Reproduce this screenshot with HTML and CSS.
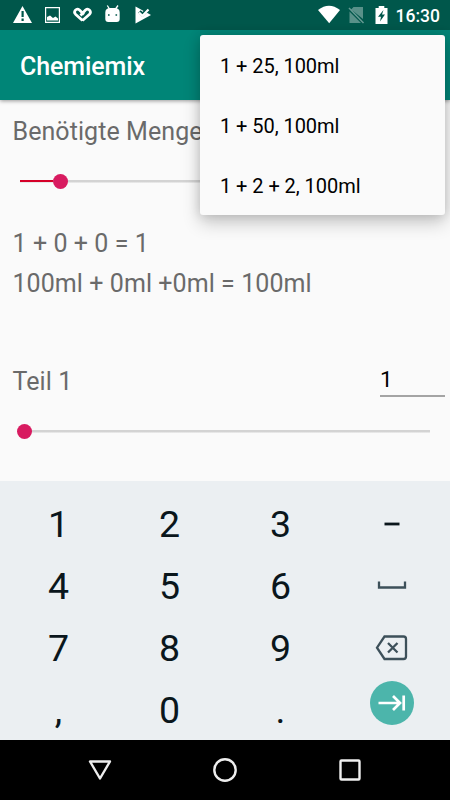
FILE: index.html
```
<!DOCTYPE html>
<html lang="de">
<head>
    <meta charset="UTF-8">
    <meta name="viewport" content="width=device-width, initial-scale=1.0">
    <title>Chemiemix</title>
    <link rel="stylesheet" href="styles.css">
</head>
<body>
    <div class="screen">
        <header>
            <div class="statusbar">
                <svg width="155" height="30" viewBox="0 0 155 30" fill="#fff">
                    <path fill-rule="evenodd" d="M22.500 6 32 23H13zM21.500 11v6h2.200v-6zM21.500 18.500v2.500h2.200v-2.500z"/>
                    <path fill-rule="evenodd" d="M45 7h15v16H45zM46.200 8.200v13.600h12.600V8.200zM47 20.500v-3.500l3-1.500 3 2.500 2.500-1.500 2.500 2v2z"/>
                    <path d="M82.500 20.500 75.500 14.200C73 11.500 76.500 7.500 79.500 10L84 14.500M80.500 15.500 85.500 10C88.500 7.500 92 11.500 89.500 14.300L82.500 20.500" fill="none" stroke="#fff" stroke-width="2.700"/>
                    <path d="M107.300 5.500 109.500 9M118 5.500 115.500 9" stroke="#fff" stroke-width="1.300"/>
                    <path fill-rule="evenodd" d="M105.300 12.500q0-4.500 5-4.500h4.400q5 0 5 4.500v6.500q0 3-3 3h-8.400q-3 0-3-3zM108 14.200v1.600h1.600v-1.600zM115.500 14.200v1.600h1.600v-1.600z"/>
                    <path d="M135.500 6.500 151 15 135.500 23.500z"/>
                    <path d="M139.500 11.500 142.500 14.500 149 8" fill="none" stroke="#00574b" stroke-width="3.600"/>
                    <path d="M139 12.500 142.500 15.700 148.500 9.500" fill="none" stroke="#fff" stroke-width="2.200"/>
                </svg>
                <svg width="72" height="30" viewBox="316 0 72 30" fill="#fff">
                    <path d="M317 10Q328 1.500 339 10L328.200 23.200z"/>
                    <path d="M352.500 7H362v12L350.200 9.400zM348.500 11.500 360 23H348.500z" opacity=".35"/>
                    <path d="M348 8 362.500 23" stroke="#fff" stroke-width="1.500" opacity=".4"/>
                    <path fill-rule="evenodd" d="M377.700 6h5.600v2h3.200v16h-12V8h3.200zM382.500 10l-5.500 6.800h3l-1 4.700 5-7h-3z"/>
                </svg>
                <span class="time">16:30</span>
            </div>
            <div class="toolbar">
                <h1>Chemiemix</h1>
            </div>
        </header>

        <main>
            <div class="row">Benötigte Menge</div>
            <div class="slider"><div class="progress"></div><div class="thumb"></div></div>
            <div class="result">
                <div>1 + 0 + 0 = 1</div>
                <div>100ml + 0ml +0ml = 100ml</div>
            </div>
            <div class="row part">
                <label for="part1">Teil 1</label>
                <input type="text" id="part1" value="1">
            </div>
            <div class="slider empty"><div class="thumb"></div></div>
        </main>

        <div class="keyboard">
            <div class="key">1</div>
            <div class="key">2</div>
            <div class="key">3</div>
            <div class="key"><svg width="32" height="32"><path d="M8.500 16h15" stroke="#0a161c" stroke-width="2.800"/></svg></div>
            <div class="key">4</div>
            <div class="key">5</div>
            <div class="key">6</div>
            <div class="key"><svg width="32" height="32" fill="none" stroke="#3d505a" stroke-width="2.300"><path d="M3 11.500v6H29v-6"/></svg></div>
            <div class="key">7</div>
            <div class="key">8</div>
            <div class="key">9</div>
            <div class="key"><svg width="36" height="32" fill="none" stroke="#3d505a" stroke-width="2.300"><path d="M10.500 4.500H29.500q2.500 0 2.500 2.500V24.500q0 2.500-2.500 2.500H10.500L3 15.700zM14 11 23.500 20.500M23.500 11 14 20.500"/></svg></div>
            <div class="key">,</div>
            <div class="key">0</div>
            <div class="key">.</div>
            <div class="key">
                <div class="next"><svg width="44" height="44" fill="none" stroke="#fff" stroke-width="2.700"><path d="M8.500 22H29M23 15 30 22 23 29M33.700 14.500v15"/></svg></div>
            </div>
        </div>

        <nav>
            <svg width="28" height="28"><path d="M4 5.500H24L14 22.500z"/></svg>
            <svg width="28" height="28"><circle cx="14" cy="14" r="10.700"/></svg>
            <svg width="28" height="28"><rect x="4.500" y="4.500" width="19" height="19" rx="1"/></svg>
        </nav>

        <ul class="menu">
            <li>1 + 25, 100ml</li>
            <li>1 + 50, 100ml</li>
            <li>1 + 2 + 2, 100ml</li>
        </ul>
    </div>
</body>
</html>
```
FILE: styles.css
```
* {
    box-sizing: border-box;
}
body {
    margin: 0;
    font-family: Roboto, Arial, sans-serif;
    background: #fafafa;
}
.screen {
    position: relative;
    display: flex;
    flex-direction: column;
    width: 450px;
    height: 800px;
    overflow: hidden;
}
header {
    background: #008577;
    color: #fff;
    box-shadow: 0 1px 4px rgba(0,0,0,0.4);
}
.statusbar {
    display: flex;
    align-items: center;
    height: 30px;
    padding-right: 10px;
    background: #00574b;
}
.statusbar svg + svg {
    margin-left: auto;
}
.time {
    margin-left: 7px;
    padding-top: 2px;
    font-size: 17.5px;
    font-weight: 500;
}
.toolbar {
    display: flex;
    align-items: center;
    height: 70px;
    padding: 2px 20px 0;
}
h1 {
    margin: 0;
    font-size: 25px;
    font-weight: 500;
    letter-spacing: -0.1px;
}
main {
    flex: 1;
    padding: 12px 0 0 12.5px;
    font-size: 25px;
    line-height: 40px;
    letter-spacing: 0.07px;
    color: #6a6a6a;
}
.slider {
    display: flex;
    align-items: center;
    width: 410px;
    height: 20px;
    margin: 19px 0 33px 7.5px;
    background: linear-gradient(#d3d3d3, #d3d3d3) center / 100% 2.5px no-repeat;
}
.progress {
    width: 33px;
    height: 2.5px;
    background: #d50028;
}
.thumb {
    width: 15px;
    height: 15px;
    border-radius: 50%;
    background: #d81b60;
}
.empty .thumb {
    margin-left: -3.5px;
}
.result {
    margin-bottom: 58px;
}
.part {
    display: flex;
    justify-content: space-between;
    padding-right: 5px;
}
.part input {
    width: 65px;
    height: 35px;
    padding: 0;
    border: 0;
    border-bottom: 2px solid #a4a4a4;
    outline: none;
    background: none;
    font: 22.5px Roboto, Arial, sans-serif;
    color: #000;
}
.keyboard {
    display: grid;
    grid-template-columns: repeat(4, 1fr);
    grid-auto-rows: 62px;
    height: 259px;
    padding: 12px 3px 0;
    background: #ebeff2;
    font-size: 37.5px;
    color: #0a161c;
}
.key {
    display: flex;
    align-items: center;
    justify-content: center;
}
.next {
    display: flex;
    width: 44px;
    height: 44px;
    margin-bottom: 15px;
    border-radius: 50%;
    background: #4cb5ab;
}
nav {
    display: flex;
    align-items: center;
    justify-content: center;
    gap: 97px;
    height: 60px;
    background: #000;
}
nav svg {
    fill: none;
    stroke: #eee;
    stroke-width: 2.4;
    stroke-linejoin: round;
}
.menu {
    position: absolute;
    top: 35px;
    right: 5px;
    width: 245px;
    height: 180px;
    margin: 0;
    padding: 1px 0 0;
    list-style: none;
    border-radius: 3px;
    background: #fafafa;
    box-shadow: 0 8px 18px rgba(0,0,0,0.2), 0 0 12px rgba(0,0,0,0.15);
}
.menu li {
    padding: 0 20px;
    font-size: 20px;
    line-height: 60px;
    letter-spacing: -0.05px;
    color: #000;
}
```
